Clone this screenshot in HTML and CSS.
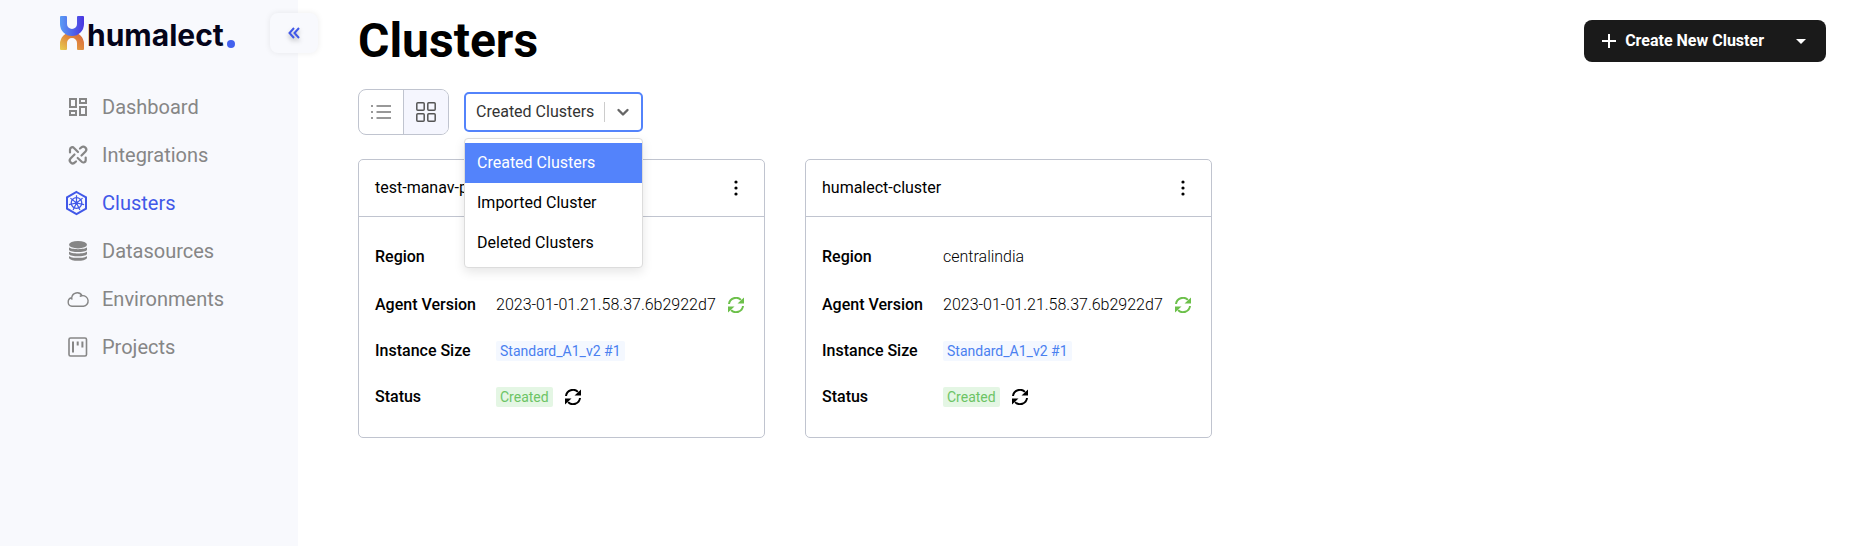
FILE: index.html
```html
<!DOCTYPE html>
<html lang="en">
<head>
<meta charset="utf-8">
<meta name="viewport" content="width=device-width, initial-scale=1">
<title>Clusters</title>
<link rel="stylesheet" href="styles.css">
</head>
<body>
<svg class="sprite" aria-hidden="true">
  <symbol id="sync" viewBox="0 0 16 16">
    <path d="M1 7A7 7 0 0 1 12.900 2.900M15 9A7 7 0 0 1 3.100 13.100" fill="none" stroke="currentColor" stroke-width="2"/>
    <path d="M16 .5V6.500H9.500ZM0 15.500V9.500H6.500Z" fill="currentColor"/>
  </symbol>
  <symbol id="kebab" viewBox="0 0 16 16">
    <g fill="currentColor"><circle cx="8" cy="2" r="1.600"/><circle cx="8" cy="8" r="1.600"/><circle cx="8" cy="14" r="1.600"/></g>
  </symbol>
</svg>
<div class="app">
  <aside class="sidebar">
    <div class="brand">
      <a class="logo" href="#">
        <svg class="logo-mark" viewBox="0 0 24 34" aria-hidden="true">
          <defs>
            <linearGradient id="cool" x1="0" y1="0" x2="1" y2="0"><stop offset="0" stop-color="#5a9cf5"/><stop offset="1" stop-color="#4a35e0"/></linearGradient>
            <linearGradient id="warm" x1="0" y1="1" x2="1" y2="0"><stop offset="0" stop-color="#e8cf50"/><stop offset=".5" stop-color="#e08a3e"/><stop offset="1" stop-color="#d9603c"/></linearGradient>
          </defs>
          <path d="M0 33V28A12 12 0 0 1 24 28V33Q24 34 23 34H18Q17 34 17 33V27A5 5 0 0 0 7 27V33Q7 34 6 34H1Q0 34 0 33Z" fill="url(#warm)"/>
          <path d="M1 0H6Q7 0 7 1V8A5 5 0 0 0 17 8V1Q17 0 18 0H23Q24 0 24 1V8A12 12 0 0 1 0 8V1Q0 0 1 0Z" fill="url(#cool)"/>
        </svg>
        <span class="logo-text">humalect</span><span class="logo-dot"></span>
      </a>
      <button class="collapse" type="button" aria-label="Collapse sidebar">
        <svg viewBox="0 0 12 12" width="12" height="12" fill="none" stroke="currentColor" stroke-width="2"><path d="M6 1L1.500 6L6 11M11 1L6.500 6L11 11"/></svg>
      </button>
    </div>
    <nav class="nav">
      <a class="nav-item" href="#">
        <svg viewBox="-1 0 22 24" fill="none" stroke="currentColor" stroke-width="2"><path d="M3 4h6v8H3zM13 4h6v4h-6zM13 12h6v8h-6zM3 16h6v4H3z"/></svg>
        <span>Dashboard</span></a>
      <a class="nav-item" href="#">
        <svg viewBox="-1 0 22 24" fill="none" stroke="currentColor" stroke-width="2.200" stroke-linecap="round"><path d="M3 9.500V6.500A2.300 2.300 0 0 1 7 5L11 9M13 5.500L14 4.700A2.600 2.600 0 0 1 18.500 8.500L14.500 12.500M18.700 14.500V17.500A2.300 2.300 0 0 1 15 19L10.700 15M9 18.500L8 19.300A2.600 2.600 0 0 1 3.500 15.500L7.500 11.500"/></svg>
        <span>Integrations</span></a>
      <a class="nav-item active" href="#" aria-current="page">
        <svg viewBox="0 0 22 24" fill="none" stroke="currentColor"><path stroke-width="2" d="M10.500 1L20 6.300V17.700L10.500 23L1 17.700V6.300Z"/><circle cx="10.500" cy="12" r="5.300" stroke-width="1.300"/><circle cx="10.500" cy="12" r="1.200" fill="currentColor"/><path stroke-width="1.200" d="M10.500 12V4.200M10.500 12L4.400 7.100M10.500 12L16.600 7.100M10.500 12L2.900 13.700M10.500 12L18.100 13.700M10.500 12L7.100 19M10.500 12L13.900 19"/></svg>
        <span>Clusters</span></a>
      <a class="nav-item" href="#">
        <svg viewBox="-1 0 22 24" fill="currentColor"><ellipse cx="11" cy="5.700" rx="9" ry="3.700"/><path d="M2 8.300C4 10.800 18 10.800 20 8.300V11C18 13.800 4 13.800 2 11ZM2 12.600C4 15.200 18 15.200 20 12.600V15.200C18 18 4 18 2 15.200ZM2 16.900C4 19.500 18 19.500 20 16.900V19C18 22.800 4 22.800 2 19Z"/></svg>
        <span>Datasources</span></a>
      <a class="nav-item" href="#">
        <svg viewBox="-1 0 22 24" fill="none" stroke="currentColor" stroke-width="1.400" stroke-linejoin="round"><path d="M5 19.300A4.300 4.300 0 0 1 4.700 10.800A5.500 5.500 0 0 1 15 8.700A5.200 5.200 0 0 1 16.500 19.300ZM15 8.700Q13.500 8.700 12.800 9.400M4.700 10.800Q4.700 12 5.200 12.600"/></svg>
        <span>Environments</span></a>
      <a class="nav-item" href="#">
        <svg viewBox="-1 0 22 24" fill="none" stroke="currentColor" stroke-width="1.600"><rect x="2" y="3" width="17.500" height="18" rx="1.500"/><path stroke-width="2" d="M6 6.500V17.500M10.700 6.500V10.500M15.400 6.500V12.500"/></svg>
        <span>Projects</span></a>
    </nav>
  </aside>

  <main class="main">
    <header class="page-head">
      <h1>Clusters</h1>
      <div class="split">
        <button class="create" type="button">
          <svg viewBox="0 0 14 14" width="14" height="14" stroke="currentColor" stroke-width="2"><path d="M7 0V14M0 7H14"/></svg>
          Create New Cluster</button>
        <button class="caret" type="button" aria-label="More create options">
          <svg viewBox="0 0 10 5" width="10" height="5" fill="currentColor"><path d="M0 0H10L5 5Z"/></svg>
        </button>
      </div>
    </header>

    <div class="toolbar">
      <div class="views" role="group" aria-label="View">
        <button class="view" type="button" aria-label="List view">
          <svg viewBox="0 0 20 20" width="20" height="20" stroke="currentColor" stroke-width="1.600"><path d="M5.500 4H20M5.500 10H20M5.500 16H20"/><path d="M0 4H2M0 10H2M0 16H2"/></svg>
        </button>
        <button class="view selected" type="button" aria-label="Grid view" aria-pressed="true">
          <svg viewBox="0 0 20 20" width="20" height="20" fill="none" stroke="currentColor" stroke-width="1.500"><rect x=".8" y=".8" width="7.400" height="7.400" rx="1"/><rect x="11.800" y=".8" width="7.400" height="7.400" rx="1"/><rect x=".8" y="11.800" width="7.400" height="7.400" rx="1"/><rect x="11.800" y="11.800" width="7.400" height="7.400" rx="1"/></svg>
        </button>
      </div>
      <div class="filter">
        <select class="filter-select" aria-label="Cluster type">
          <option selected>Created Clusters</option>
          <option>Imported Cluster</option>
          <option>Deleted Clusters</option>
        </select>
        <span class="filter-arrow">
          <svg viewBox="0 0 20 20" width="20" height="20" fill="none" stroke="currentColor" stroke-width="2.400" stroke-linecap="round" stroke-linejoin="round"><path d="M5.500 8L10 12.500L14.500 8"/></svg>
        </span>
        <ul class="menu" role="listbox" aria-label="Cluster type">
          <li class="menu-item chosen" role="option" aria-selected="true">Created Clusters</li>
          <li class="menu-item" role="option">Imported Cluster</li>
          <li class="menu-item" role="option">Deleted Clusters</li>
        </ul>
      </div>
    </div>

    <section class="cards">
      <article class="card">
        <header class="card-head">
          <h2>test-manav-p</h2>
          <button class="icon-btn" type="button" aria-label="Cluster menu"><svg><use href="#kebab"/></svg></button>
        </header>
        <dl class="card-body">
          <div class="row"><dt>Region</dt><dd></dd></div>
          <div class="row"><dt>Agent Version</dt><dd>2023-01-01.21.58.37.6b2922d7 <button class="icon-btn green" type="button" aria-label="Update agent"><svg><use href="#sync"/></svg></button></dd></div>
          <div class="row short"><dt>Instance Size</dt><dd><span class="tag blue">Standard_A1_v2 #1</span></dd></div>
          <div class="row"><dt>Status</dt><dd><span class="tag ok">Created</span> <button class="icon-btn" type="button" aria-label="Refresh status"><svg><use href="#sync"/></svg></button></dd></div>
        </dl>
      </article>
      <article class="card">
        <header class="card-head">
          <h2>humalect-cluster</h2>
          <button class="icon-btn" type="button" aria-label="Cluster menu"><svg><use href="#kebab"/></svg></button>
        </header>
        <dl class="card-body">
          <div class="row"><dt>Region</dt><dd>centralindia</dd></div>
          <div class="row"><dt>Agent Version</dt><dd>2023-01-01.21.58.37.6b2922d7 <button class="icon-btn green" type="button" aria-label="Update agent"><svg><use href="#sync"/></svg></button></dd></div>
          <div class="row short"><dt>Instance Size</dt><dd><span class="tag blue">Standard_A1_v2 #1</span></dd></div>
          <div class="row"><dt>Status</dt><dd><span class="tag ok">Created</span> <button class="icon-btn" type="button" aria-label="Refresh status"><svg><use href="#sync"/></svg></button></dd></div>
        </dl>
      </article>
    </section>
  </main>
</div>
</body>
</html>
```
FILE: styles.css
```css
* { box-sizing: border-box; }

body {
  margin: 0;
  background: #fff;
  color: #000;
  font: 400 16px/24px Roboto, "Liberation Sans", sans-serif;
}

button {
  margin: 0;
  padding: 0;
  border: 0;
  background: none;
  color: inherit;
  font: inherit;
  cursor: pointer;
}

svg { display: block; }

.sprite {
  position: absolute;
  width: 0;
  height: 0;
}

.app {
  display: grid;
  grid-template-columns: 298px minmax(0, 1fr);
  min-height: 100vh;
}

/* Sidebar */
.sidebar { background: #f8f9fd; }

.brand {
  display: flex;
  align-items: center;
  justify-content: space-between;
  margin-right: -20px;
  padding: 13px 0 0 60px;
}

.logo {
  display: flex;
  align-items: flex-end;
  color: #04041a;
  text-decoration: none;
}

.logo-mark {
  width: 24px;
  height: 34px;
}

.logo-text {
  margin-left: 3px;
  font: 700 30px/30px Inter, sans-serif;
}

.logo-dot {
  width: 8px;
  height: 8px;
  margin: 0 0 2px 3px;
  border-radius: 50%;
  background: #4361ee;
}

.collapse {
  display: grid;
  place-items: center;
  width: 48px;
  height: 40px;
  border-radius: 8px;
  background: #f8f9fd;
  box-shadow: 0 0 6px rgba(0, 0, 0, .08);
  color: #4158e8;
}

.collapse svg { filter: drop-shadow(0 3px 2px rgba(0, 0, 0, .25)); }

.nav {
  display: grid;
  gap: 24px;
  padding: 42px 0 0 66px;
}

.nav-item {
  display: flex;
  align-items: center;
  gap: 14px;
  color: #868686;
  font-size: 20px;
  text-decoration: none;
}

.nav-item svg {
  width: 22px;
  height: 24px;
  overflow: visible;
}

.nav-item.active { color: #4158e8; }

/* Page header */
.main { padding: 13px 44px 40px 60px; }

.page-head {
  display: flex;
  align-items: center;
  justify-content: space-between;
}

h1 {
  margin: 0;
  font-size: 48px;
  line-height: 56px;
}

.split {
  display: flex;
  height: 42px;
  border-radius: 8px;
  background: #1a1a1a;
  color: #fff;
}

.create {
  display: flex;
  align-items: center;
  gap: 9px;
  padding: 0 12px 0 18px;
  font-weight: 700;
}

.caret {
  display: grid;
  place-items: center;
  width: 50px;
}

/* Toolbar */
.toolbar {
  display: flex;
  align-items: center;
  gap: 15px;
  margin: 20px 0 24px;
}

.views {
  display: flex;
  height: 46px;
  border: 1px solid #c0c4cf;
  border-radius: 8px;
  overflow: hidden;
}

.view {
  display: grid;
  place-items: center;
  width: 44px;
  color: #777;
}

.view.selected {
  width: 45px;
  border-left: 1px solid #c0c4cf;
  background: #f5f6fe;
  color: #555;
}

.filter {
  position: relative;
  width: 179px;
}

.filter-select {
  display: block;
  width: 100%;
  height: 40px;
  padding: 0 40px 0 10px;
  border: 2px solid #5383fb;
  border-radius: 5px;
  outline: 0;
  appearance: none;
  background: #fff;
  color: #333;
  font: inherit;
}

.filter-arrow {
  position: absolute;
  top: 10px;
  right: 10px;
  padding-left: 8px;
  border-left: 1px solid #ccc;
  color: #666;
  pointer-events: none;
}

.menu {
  position: absolute;
  z-index: 1;
  top: 100%;
  left: 0;
  width: 100%;
  margin: 6px 0 0;
  padding: 4px 0;
  border: 1px solid #dcdcdc;
  border-radius: 4px;
  background: #fff;
  box-shadow: 0 4px 11px rgba(0, 0, 0, .1);
  list-style: none;
}

.menu-item { padding: 8px 12px; }

.menu-item.chosen {
  background: #5383fb;
  color: #fff;
}

/* Cluster cards */
.cards {
  display: flex;
  flex-wrap: wrap;
  gap: 40px;
}

.card {
  flex: 0 1 407px;
  border: 1px solid #c0c4cf;
  border-radius: 5px;
}

.card-head {
  display: flex;
  align-items: center;
  justify-content: space-between;
  padding: 16px 20px 16px 16px;
  border-bottom: 1px solid #c0c4cf;
}

h2 {
  margin: 0;
  font-size: 16px;
  font-weight: 400;
}

.icon-btn svg {
  width: 16px;
  height: 16px;
}

.card-body {
  display: grid;
  gap: 24px;
  margin: 0;
  padding: 28px 16px;
}

.row {
  display: grid;
  grid-template-columns: 121px 1fr;
  align-items: center;
  height: 24px;
}

.row.short {
  height: 20px;
  line-height: 20px;
}

dt { font-weight: 500; }

dd {
  display: flex;
  align-items: center;
  gap: 12px;
  margin: 0;
  font-weight: 300;
  white-space: nowrap;
}

.green { color: #6cc04a; }

.tag {
  padding: 0 4px;
  border-radius: 2px;
  font-size: 14px;
  font-weight: 400;
  line-height: 20px;
}

.tag.blue {
  background: #f4f8ff;
  color: #4a80f0;
}

.tag.ok {
  background: #e4f6e4;
  color: #6cc464;
}
```
